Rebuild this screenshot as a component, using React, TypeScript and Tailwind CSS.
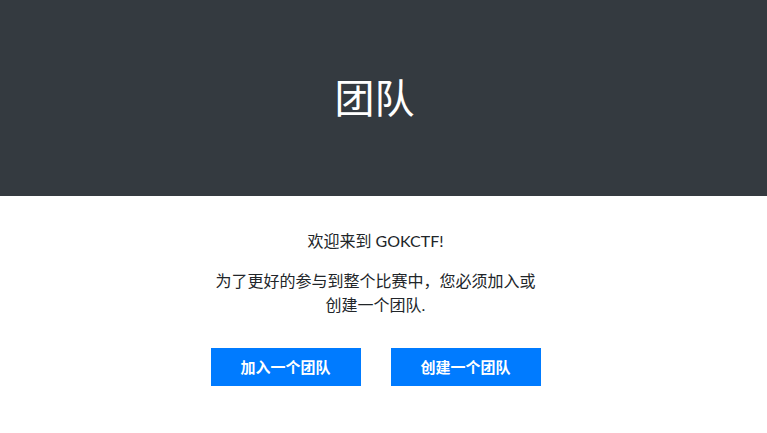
export default function App() {
  return (
    <div className="min-h-[433px] bg-white font-['Lato','Noto_Sans_CJK_SC',sans-serif] text-[#212529]">
      <div className="flex h-[196px] items-center justify-center bg-[#343a40] pr-[18px]">
        <h1 className="text-[40px] leading-[48px] text-white">团队</h1>
      </div>
      <div className="pr-[16px]">
        <div className="mx-auto flex w-[330px] flex-col items-center text-center">
          <p className="mt-[33px] text-[16px] leading-6">欢迎来到 GOKCTF!</p>
          <p className="mt-4 text-[16px] leading-6">为了更好的参与到整个比赛中，您必须加入或创建一个团队.</p>
        </div>
        <div className="mt-[31px] flex justify-center gap-[30px]">
          <button className="h-[38px] w-[150px] bg-[#007bff] text-[15px] font-bold text-white">加入一个团队</button>
          <button className="h-[38px] w-[150px] bg-[#007bff] text-[15px] font-bold text-white">创建一个团队</button>
        </div>
      </div>
    </div>
  );
}
